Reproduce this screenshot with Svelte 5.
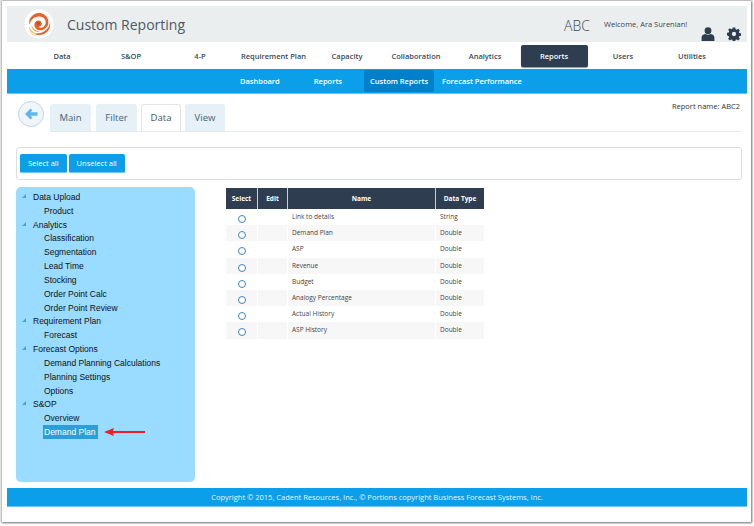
<script>
  const nav = ['Data','S&OP','4-P','Requirement Plan','Capacity','Collaboration','Analytics','Reports','Users','Utilities'];
  const tabs = ['Main','Filter','Data','View'];
  const tree = [
    ['Data Upload',['Product']],
    ['Analytics',['Classification','Segmentation','Lead Time','Stocking','Order Point Calc','Order Point Review']],
    ['Requirement Plan',['Forecast']],
    ['Forecast Options',['Demand Planning Calculations','Planning Settings','Options']],
    ['S&OP',['Overview','Demand Plan']]
  ];
  const rows = [['Link to details','String'],['Demand Plan','Double'],['ASP','Double'],['Revenue','Double'],['Budget','Double'],['Analogy Percentage','Double'],['Actual History','Double'],['ASP History','Double']];
</script>

<div class="shell">
<div class="frame">
  <div class="page">
    <header class="top">
      <div class="logo">
        <svg width="30" height="30" viewBox="0 0 30 30">
          <circle cx="15" cy="15" r="14.5" fill="#fff"/>
          <path d="M14 4 C8 5 4 10 5.500 16 C6.500 11 10 7.500 15 7.500 C20 7.500 22.500 11 21.500 15 C20.500 18.500 16.500 19.500 14.500 18 C17 17.500 18.500 15.500 17.500 13.500 C16 10.500 11.500 11 10.500 14.500 C9.500 19 14 22.500 18.500 21 C23 19.500 25.500 15 24 10.500 C22.500 6 18 3.500 14 4 Z" fill="#e4632b"/>
          <circle cx="14.300" cy="14.500" r="1.800" fill="#d8452a"/>
          <path d="M26 13 C27.500 20 22 26 15.500 26 C13 26 11.500 25.500 10 24.500 C15 25 20 23.500 23 20 C25 18 25.700 15.500 26 13 Z" fill="#e4632b"/>
          <path d="M5 17 C6 21 9 23.500 13 24.500 C10 25 7 23.500 5.500 20.500 Z M5.500 21.500 C7 24 9.500 26 12.500 26.500 C9 27 6.500 24.500 5.500 21.500 Z" fill="#f6b23e"/>
          <path d="M7.500 16 C8.500 19.500 12 22.500 16 22.500 C12 24 7.500 21 7.500 16 Z" fill="#f29a35"/>
        </svg>
      </div>
      <h1>Custom Reporting</h1>
      <span class="org">ABC</span>
      <span class="welcome">Welcome, Ara Surenian!</span>
      <svg class="user" width="14" height="14" viewBox="0 0 14 14"><circle cx="7" cy="3.700" r="3.400" fill="#2e3d4f"/><path d="M0.600 14 V10.500 C0.600 8 3 7.300 4.500 7 C6 8 8 8 9.500 7 C11 7.300 13.400 8 13.400 10.500 V14 Z" fill="#2e3d4f"/></svg>
      <svg class="gear" width="14" height="14" viewBox="-1 -1 26 26"><path fill="#2e3d4f" fill-rule="evenodd" d="M9.700 0h4.600l.6 3.300 2 .8 2.800-1.900 3.200 3.200-1.900 2.800.8 2 3.200.6v4.600l-3.200.6-.8 2 1.900 2.800-3.200 3.200-2.800-1.900-2 .8-.6 3.200H9.700l-.6-3.200-2-.8-2.800 1.900-3.200-3.200 1.900-2.800-.8-2L-1 14.300V9.700l3.200-.6.8-2-1.900-2.800 3.200-3.200 2.800 1.900 2-.8zM12 8a4 4 0 1 0 0 8 4 4 0 0 0 0-8z"/></svg>
    </header>

    <nav class="main">
      {#each nav as n}
        <a class:active={n === 'Reports'}>{n}</a>
      {/each}
    </nav>

    <nav class="sub">
      <a class="s1">Dashboard</a>
      <a class="s2">Reports</a>
      <a class="s3">Custom Reports</a>
      <a class="s4">Forecast Performance</a>
    </nav>

    <section class="tabbar">
      <span class="back">
        <svg width="14" height="12" viewBox="0 0 14 12"><path d="M6.500 0.500 L1 6 L6.500 11.500 L8.500 9.500 L6.500 7.700 H13.500 V4.300 H6.500 L8.500 2.500 Z" fill="#5db8f2"/></svg>
      </span>
      <div class="tabs">
        {#each tabs as t}
          <span class="tab" class:on={t === 'Data'}>{t}</span>
        {/each}
      </div>
      <span class="rname">Report name: ABC2</span>
    </section>

    <div class="toolbar">
      <button>Select all</button>
      <button>Unselect all</button>
    </div>

    <div class="body">
      <aside class="tree">
        {#each tree as g}
          <div class="gr"><i></i>{g[0]}</div>
          {#each g[1] as c}
            <div class="leaf"><span class:sel={c === 'Demand Plan'}>{c}</span>
              {#if c === 'Demand Plan'}
                <svg class="arrow" width="42" height="10" viewBox="0 0 42 10"><path d="M0 5 L10 1 L9 4 H41 V6 H9 L10 9 Z" fill="#ee1c25"/></svg>
              {/if}
            </div>
          {/each}
        {/each}
      </aside>

      <div class="grid">
        <div class="hrow">
          <div class="c1">Select</div><div class="c2">Edit</div><div class="c3">Name</div><div class="c4">Data Type</div>
        </div>
        {#each rows as r, i}
          <div class="row" class:alt={i % 2 === 1}>
            <div class="c1"><b class="radio"></b></div><div class="c2"></div><div class="c3 l">{r[0]}</div><div class="c4 l">{r[1]}</div>
          </div>
        {/each}
      </div>
    </div>

    <footer>Copyright © 2015, Cadent Resources, Inc., © Portions copyright Business Forecast Systems, Inc.</footer>
  </div>
</div>
</div>

<style>
  :global(body) { margin: 0; background: #fff; }
  .shell { width: 754px; height: 526px; padding: 1px 3px 4px 2px; box-sizing: border-box; overflow: hidden; }
  .frame {
    height: 521px; box-sizing: border-box; padding: 5px 4px 0 5px;
    background: #fff; box-shadow: 0 0 2px 1px rgba(0,0,0,.35), 1px 1px 2px rgba(0,0,0,.3);
    font-family: "Open Sans", sans-serif; color: #333;
  }
  .page { width: 740px; }
  .top { height: 36px; background: #ebeeef; display: flex; align-items: center; position: relative; }
  .logo { margin-left: 17px; width: 30px; height: 30px; }
  h1 { margin: 0 0 0 13px; font-size: 14px; font-weight: 400; color: #4a5a66; }
  .org { position: absolute; left: 557px; top: 10px; font-size: 14px; color: #3a4650; font-weight: 300; }
  .welcome { position: absolute; left: 597px; top: 13px; font-size: 7.500px; color: #3a4650; }
  .user { position: absolute; left: 694px; top: 21px; }
  .gear { position: absolute; left: 720px; top: 21px; }

  .main { height: 27px; display: grid; grid-template-columns: 69px 69px 69px 78px 69px 69px 69px 69px 69px 69px; padding-left: 20.500px; background: #fff; align-items: center; }
  .main a { font-size: 7.500px; font-weight: 600; color: #3c4a56; text-align: center; line-height: 22px; height: 22px; margin: 0 1px; border-radius: 2px; white-space: nowrap; }
  .main a.active { background: #2e3d4f; color: #fff; box-shadow: 0 1px 1px #8a949c; }

  .sub { height: 24px; background: #0a9fe8; border-bottom: 1px solid #6cc4ef; display: flex; align-items: center; }
  .sub a { font-size: 7.500px; font-weight: 600; color: #fff; line-height: 22px; }
  .s1 { margin-left: 233px; }
  .s2 { margin-left: 34px; }
  .s3 { margin-left: 22px; padding: 0 6px; background: #0080cb; border-radius: 2px; }
  .s4 { margin-left: 8px; }

  .tabbar { position: relative; height: 37px; margin: 0 5px 0 11px; }
  .back { position: absolute; top: 7px; width: 26px; height: 26px; box-sizing: border-box; border: 1px solid #b9d8ee; border-radius: 50%; background: #f2f5f7; display: flex; align-items: center; justify-content: center; }
  .tabs { position: absolute; left: 32px; top: 10px; right: 0; height: 27px; display: flex; gap: 4px; border-bottom: 1px solid #e6e9ea; }
  .tab { height: 27px; box-sizing: border-box; padding-top: 7px; width: 41px; text-align: center; font-size: 9.500px; color: #3f6580; background: #e6f0f7; border-radius: 3px 3px 0 0; }
  .tab:first-child { margin-right: 1px; }
  .tab.on { width: 40px; background: #fff; color: #4a5560; border: 1px solid #e3e6e8; border-bottom: 0; padding-top: 6px; }
  .tab:last-child { width: 40px; }
  .rname { position: absolute; right: 2px; top: 7px; font-size: 7.500px; color: #333; }

  .toolbar { margin: 16px 5px 0 9px; height: 33px; box-sizing: border-box; border: 1px solid #dcdfe0; border-radius: 3px; display: flex; align-items: center; gap: 2px; padding: 0 0 2px 3px; }
  button { height: 18px; padding: 0 8px; border: 0; border-radius: 2px 2px 1px 1px; background: #0a9fe8; color: #fff; font-family: "Open Sans", sans-serif; font-size: 7.500px; font-weight: 400; box-shadow: 0 1px 0 #6cc4ef; }

  .body { display: flex; margin: 7px 0 0 9px; height: 295px; }
  .tree { width: 179px; height: 295px; box-sizing: border-box; background: #99dcff; border-radius: 5px; padding: 3px 0 0 0; font-family: "Liberation Sans", Arial, sans-serif; font-size: 8.500px; color: #111; }
  .gr { height: 13.830px; line-height: 14px; padding-left: 17px; position: relative; }
  .gr i { position: absolute; left: 6px; top: 4px; width: 0; height: 0; border-left: 4px solid transparent; border-bottom: 4px solid #4a9fd8; }
  .leaf { height: 13.830px; line-height: 14px; padding-left: 28px; position: relative; }
  .leaf .sel { background: #2a9fd8; color: #fff; padding: 0 2px 0 1px; margin-left: -1px; display: inline-block; }
  .arrow { position: absolute; left: 88px; top: 2px; }

  .grid { margin: 1px 0 0 31px; width: 258px; font-size: 6.500px; }
  .hrow, .row { display: grid; grid-template-columns: 31px 30px 148px 49px; }
  .hrow { height: 21px; background: #2e3d4f; color: #fff; font-weight: 700; line-height: 21px; text-align: center; }
  .hrow > div + div { border-left: 1px solid #c9d0d6; }
  .row { height: 16.200px; line-height: 15px; color: #444; }
  .row.alt > div { background: #f7f7f7; }
  .row > div + div { border-left: 1px solid #fff; }
  .c1 { text-align: center; }
  .l { padding-left: 4px; }
  .radio { display: inline-block; width: 6px; height: 6px; margin-top: 6px; border: 1px solid #3d85c6; border-radius: 50%; vertical-align: top; background: #fff; }

  footer { margin-top: 6px; height: 18px; background: #0a9fe8; border-bottom: 1px solid #6cc4ef; color: #e4f4fd; font-size: 7.500px; line-height: 18px; text-align: center; }
</style>
